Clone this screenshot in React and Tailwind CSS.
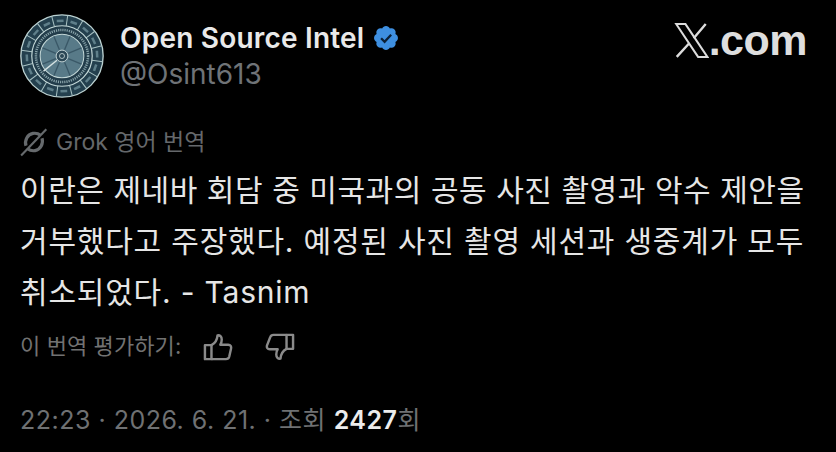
import React from 'react';

const font = { sans: "font-['Inter','Noto_Sans_CJK_KR',sans-serif]" };

const Avatar = () => {
  const spokes = Array.from({ length: 8 }, (_, i) => i * 45 + 22.5);
  const cells = Array.from({ length: 16 }, (_, i) => i * 22.5 + 8);
  const toXY = (r, deg) => [50 + r * Math.cos((deg * Math.PI) / 180), 50 + r * Math.sin((deg * Math.PI) / 180)];
  return (
    <svg viewBox="0 0 100 100" className="w-[84px] h-[84px] shrink-0">
      <circle cx="50" cy="50" r="49" fill="#24404e" stroke="#bcd2d2" strokeWidth="1.6" />
      {cells.map((d) => {
        const [x1, y1] = toXY(36, d);
        const [x2, y2] = toXY(49, d);
        return <line key={d} x1={x1} y1={y1} x2={x2} y2={y2} stroke="#a9c2c4" strokeWidth="1.2" />;
      })}
      {cells.map((d) => {
        const [x1, y1] = toXY(42, d + 6);
        const [x2, y2] = toXY(42, d + 17);
        return <line key={d} x1={x1} y1={y1} x2={x2} y2={y2} stroke="#5f7f8a" strokeWidth="3" />;
      })}
      <circle cx="50" cy="50" r="36" fill="#223c4a" stroke="#c3d7d7" strokeWidth="1.4" />
      <circle cx="50" cy="50" r="26" fill="#587a88" stroke="#c3d7d7" strokeWidth="1.2" />
      {spokes.map((d) => {
        const [x1, y1] = toXY(8, d);
        const [x2, y2] = toXY(25, d);
        return <line key={d} x1={x1} y1={y1} x2={x2} y2={y2} stroke="#3a5867" strokeWidth="1.6" />;
      })}
      <line x1="28" y1="68" x2="44" y2="55" stroke="#d5e2e2" strokeWidth="1.6" />
      <circle cx="50" cy="50" r="31" fill="none" stroke="#a9c4c8" strokeWidth="3" strokeDasharray="1.4 1.2" opacity="0.75" />
      <circle cx="50" cy="50" r="7" fill="#2c4856" stroke="#d5e2e2" strokeWidth="1" />
      <circle cx="50" cy="50" r="3" fill="none" stroke="#d5e2e2" strokeWidth="0.9" />
    </svg>
  );
};

const Verified = () => (
  <svg viewBox="0 0 24 24" className="w-[28px] h-[28px] ml-[8px] shrink-0">
    <path
      fill="#3e8fe0"
      d="M22.25 12c0-1.43-.88-2.67-2.19-3.34.46-1.39.2-2.9-.81-3.91s-2.52-1.27-3.91-.81c-.66-1.31-1.91-2.19-3.34-2.19s-2.67.88-3.33 2.19c-1.4-.46-2.91-.2-3.92.81s-1.26 2.52-.8 3.91c-1.31.67-2.2 1.91-2.2 3.34s.89 2.67 2.2 3.34c-.46 1.39-.21 2.9.8 3.91s2.52 1.26 3.91.81c.67 1.31 1.91 2.19 3.34 2.19s2.68-.88 3.34-2.19c1.39.45 2.9.2 3.91-.81s1.27-2.52.81-3.91c1.31-.67 2.19-1.91 2.19-3.34z"
    />
    <path fill="none" stroke="#0c2036" strokeWidth="2" d="M7.8 12.2l3 3 5.6-6" />
  </svg>
);

const GrokIcon = () => (
  <svg viewBox="0 0 28 28" className="w-[30px] h-[30px] shrink-0 -ml-[1px]" fill="none" stroke="#666a6d" strokeWidth="3">
    <path d="M21.5 10.5c1.4 5-1.3 10.5-6.5 11.5-2.6.5-5-.2-7-1.700" />
    <path d="M6.500 17.500C5 12.500 7.800 7 13 6c2.700-.5 5.200.2 7 1.700" />
    <path d="M25.500 2L2 26.500" strokeWidth="2" />
  </svg>
);

const ThumbUp = () => (
  <svg viewBox="0 0 32 30" className="w-[30px] h-[28px]" fill="none" stroke="#8a8a8a" strokeWidth="2.6" strokeLinejoin="round">
    <path d="M2 13h7v15H2z" />
    <path d="M9 13c4-2 6-5 6.5-10.500 2.500-.5 4.500 1.500 4.500 4.500 0 2-.5 4-1.500 5.500h8.500c2.500 0 3.500 2 3 4l-2 9c-.5 1.800-1.500 2.500-3.500 2.500H9" />
  </svg>
);

const ThumbDown = () => (
  <svg viewBox="0 0 32 30" className="w-[30px] h-[28px]" fill="none" stroke="#8a8a8a" strokeWidth="2.6" strokeLinejoin="round">
    <path d="M30 2h-7v15h7z" />
    <path d="M23 2H9C7 2 6 3 5.500 4.500l-3.500 9c-.5 2 .5 4 3 4h8.500c-1 1.500-1.500 3.500-1.500 5.500 0 3 2 5 4.500 4.500C17 22 19 19 23 17" />
  </svg>
);

export default function App() {
  return (
    <div className={`w-[836px] h-[452px] overflow-hidden bg-black pl-[20px] pr-[29px] pt-[14px] ${font.sans}`}>
      <div className="flex items-start justify-between">
        <div className="flex items-center">
          <Avatar />
          <div className="ml-[16px] pb-[2px]">
            <div className="flex items-center h-[38px]">
              <span className="text-[28px] font-semibold text-[#e9e9e9] tracking-[0.2px]">Open Source Intel</span>
              <Verified />
            </div>
            <div className="text-[28px] leading-[34px] text-[#6f7377]">@Osint613</div>
          </div>
        </div>
        <div className="flex items-center mt-[6px] h-[40px]">
          <svg viewBox="0 0 32 32" className="w-[35px] h-[35px] shrink-0" fill="none" stroke="#dcdcdc" strokeWidth="1.800">
            <path d="M2 1h8.500l20 30H22z" />
            <path d="M29 1L18 14M13.500 19L2.500 31" strokeWidth="2.200" />
          </svg>
          <span className="font-['Liberation_Sans',sans-serif] text-[43px] font-bold text-[#dedede] tracking-[-0.5px]">.com</span>
        </div>
      </div>

      <div className="flex items-center mt-[29px] h-[30px] text-[#65686b] text-[23px]">
        <GrokIcon />
        <span className="ml-[7px]">Grok 영어 번역</span>
      </div>

      <div className="mt-[8px] text-[30px] leading-[51px] text-[#e6e6e6]">
        <p className="tracking-[0.55px]">이란은 제네바 회담 중 미국과의 공동 사진 촬영과 악수 제안을</p>
        <p className="tracking-[0.8px]">거부했다고 주장했다. 예정된 사진 촬영 세션과 생중계가 모두</p>
        <p className="tracking-[0.8px]">취소되었다. - Tasnim</p>
      </div>

      <div className="flex items-center mt-[11px] h-[34px] text-[#727272] text-[22px] tracking-[0.1px]">
        <span>이 번역 평가하기:</span>
        <div className="ml-[22px] mt-[1px]"><ThumbUp /></div>
        <div className="ml-[32px] mt-[1px]"><ThumbDown /></div>
      </div>

      <div className="mt-[40px] text-[25px] leading-[34px] text-[#6f7173] tracking-[0.5px]">
        22:23 · 2026. 6. 21. · 조회 <span className="font-semibold text-[#ececec]">2427</span>회
      </div>
    </div>
  );
}
